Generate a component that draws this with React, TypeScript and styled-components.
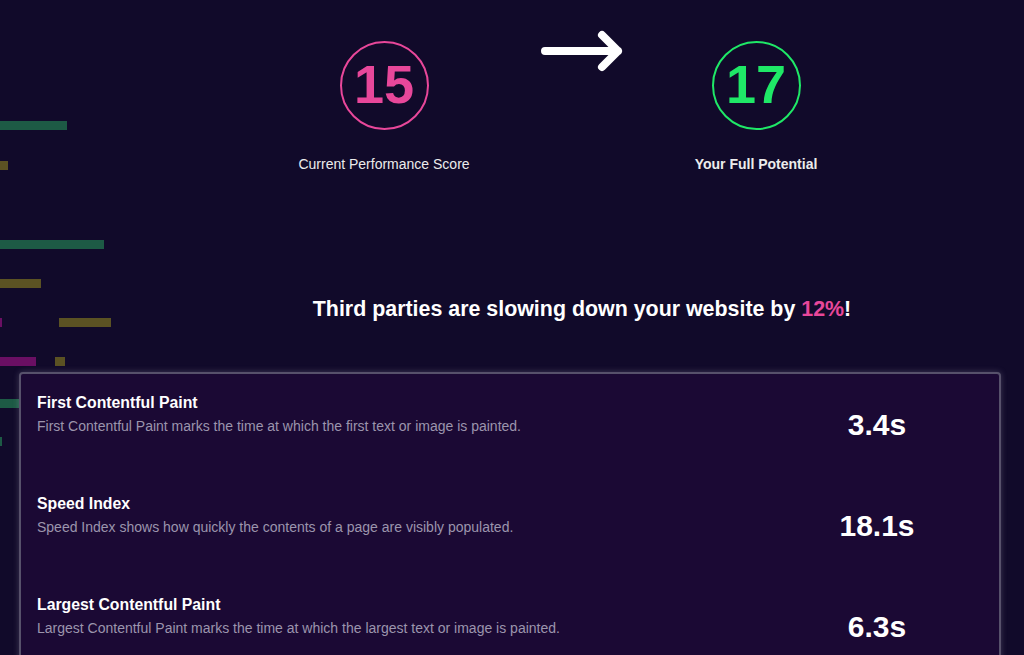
import { FC } from 'react';
import { createGlobalStyle, styled } from 'styled-components';

type Metric = {
  title: string;
  description: string;
  value: string;
};

type Bar = { x: number; y: number; w: number; color: string };

const metrics: Metric[] = [
  {
    title: 'First Contentful Paint',
    description: 'First Contentful Paint marks the time at which the first text or image is painted.',
    value: '3.4s',
  },
  {
    title: 'Speed Index',
    description: 'Speed Index shows how quickly the contents of a page are visibly populated.',
    value: '18.1s',
  },
  {
    title: 'Largest Contentful Paint',
    description: 'Largest Contentful Paint marks the time at which the largest text or image is painted.',
    value: '6.3s',
  },
];

const GREEN = '#1d5a45';
const OLIVE = '#5b5223';
const MAGENTA = '#6a0f63';

const bars: Bar[] = [
  { x: 0, y: 121, w: 67, color: GREEN },
  { x: 0, y: 161, w: 8, color: OLIVE },
  { x: 0, y: 240, w: 104, color: GREEN },
  { x: 0, y: 279, w: 41, color: OLIVE },
  { x: 0, y: 318, w: 2, color: MAGENTA },
  { x: 59, y: 318, w: 52, color: OLIVE },
  { x: 0, y: 357, w: 36, color: MAGENTA },
  { x: 55, y: 357, w: 10, color: OLIVE },
  { x: 0, y: 399, w: 40, color: GREEN },
  { x: 0, y: 437, w: 2, color: GREEN },
];

const GlobalStyle = createGlobalStyle`
  html, body {
    margin: 0;
    padding: 0;
    background: #110a2a;
    overflow: hidden;
  }
  body {
    font-family: "Liberation Sans", Arial, sans-serif;
    color: #fff;
  }
`;

const Waterfall: FC = () => (
  <WaterfallSvg width="120" height="460" viewBox="0 0 120 460">
    {bars.map((b, i) => (
      <rect key={i} x={b.x} y={b.y} width={b.w} height={9} fill={b.color} />
    ))}
  </WaterfallSvg>
);

const ArrowIcon: FC = () => (
  <ArrowSvg width="90" height="48" viewBox="0 0 90 48" fill="none">
    <path
      d="M8 24H81M65 8L81 24L65 40"
      stroke="#fff"
      strokeWidth="8"
      strokeLinecap="round"
      strokeLinejoin="round"
    />
  </ArrowSvg>
);

const ScoreBlock: FC<{ score: number; label: string; color: string; $bold?: boolean }> = ({
  score,
  label,
  color,
  $bold,
}) => (
  <ScoreColumn>
    <ScoreCircle $color={color}>{score}</ScoreCircle>
    <ScoreLabel $bold={$bold}>{label}</ScoreLabel>
  </ScoreColumn>
);

export default function App() {
  return (
    <>
      <GlobalStyle />
      <Page>
        <Waterfall />
        <ScoresRow>
          <ScoreBlock score={15} label="Current Performance Score" color="#e8479a" />
          <ArrowIcon />
          <ScoreBlock score={17} label="Your Full Potential" color="#1fe867" $bold />
        </ScoresRow>
        <Headline>
          Third parties are slowing down your website by <Accent>12%</Accent>!
        </Headline>
        <MetricsCard>
          {metrics.map((m) => (
            <MetricRow key={m.title}>
              <MetricText>
                <MetricTitle>{m.title}</MetricTitle>
                <MetricDescription>{m.description}</MetricDescription>
              </MetricText>
              <MetricValue>{m.value}</MetricValue>
            </MetricRow>
          ))}
        </MetricsCard>
      </Page>
    </>
  );
}

const Page = styled.div`
  position: relative;
  min-height: 655px;
  padding-top: 27px;
`;

const WaterfallSvg = styled.svg`
  position: absolute;
  left: 0;
  top: 0;
  z-index: 0;
`;

const ScoresRow = styled.div`
  position: relative;
  z-index: 1;
  display: flex;
  align-items: flex-start;
  padding-left: 274px;
`;

const ArrowSvg = styled.svg`
  display: block;
  margin: 0 19px 0 43px;
`;

const ScoreColumn = styled.div`
  width: 220px;
  display: flex;
  flex-direction: column;
  align-items: center;
  padding-top: 14px;
`;

const ScoreCircle = styled.div<{ $color: string }>`
  box-sizing: border-box;
  width: 89px;
  height: 89px;
  padding-bottom: 4px;
  border-radius: 50%;
  border: 2px solid ${({ $color }) => $color};
  color: ${({ $color }) => $color};
  display: flex;
  align-items: center;
  justify-content: center;
  font-size: 54px;
  font-weight: bold;
  line-height: 1;
`;

const ScoreLabel = styled.div<{ $bold?: boolean }>`
  margin-top: 26px;
  font-size: 14px;
  line-height: 17px;
  color: #ececec;
  font-weight: ${({ $bold }) => ($bold ? 'bold' : 'normal')};
`;

const Headline = styled.h2`
  position: relative;
  z-index: 1;
  margin: 124px 0 0;
  padding-left: 140px;
  text-align: center;
  font-size: 21.4px;
  line-height: 24px;
  font-weight: bold;
  color: #fff;
`;

const Accent = styled.span`
  color: #e8479a;
`;

const MetricsCard = styled.div`
  position: relative;
  z-index: 1;
  margin: 51px 23px 0 19px;
  padding: 20px 16px 40px;
  background: #1b0934;
  border: 2px solid #57516b;
  border-radius: 4px;
  box-shadow: 0 0 6px rgba(200, 195, 220, 0.25);
  display: flex;
  flex-direction: column;
  gap: 53px;
`;

const MetricRow = styled.div`
  display: flex;
  align-items: flex-start;
  justify-content: space-between;
`;

const MetricText = styled.div`
  display: flex;
  flex-direction: column;
  gap: 5px;
`;

const MetricTitle = styled.div`
  font-size: 15.8px;
  line-height: 18px;
  font-weight: bold;
  color: #fff;
`;

const MetricDescription = styled.div`
  font-size: 14px;
  line-height: 18px;
  color: #9b95ad;
`;

const MetricValue = styled.div`
  width: 160px;
  margin: 14px 26px 0 0;
  text-align: center;
  font-size: 30px;
  line-height: 34px;
  font-weight: bold;
  color: #fff;
`;
